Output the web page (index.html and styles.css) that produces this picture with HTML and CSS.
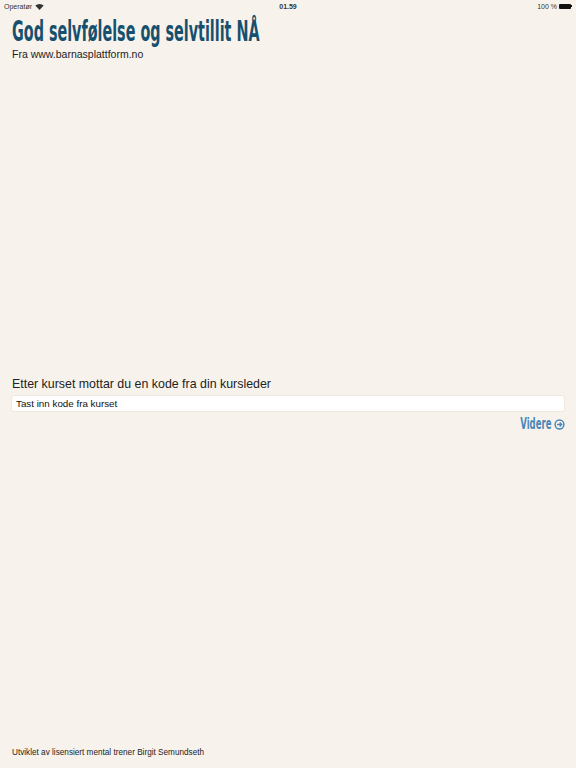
FILE: index.html
```html
<!DOCTYPE html>
<html lang="no">
<head>
<meta charset="utf-8">
<link rel="stylesheet" href="styles.css">
</head>
<body>
<div class="page">
  <div class="status">
    <div class="st-left">Operatør
      <svg class="wifi" width="9" height="7" viewBox="0 0 9 7"><path d="M4.5 7 L0.3 2.6 A6 6 0 0 1 8.7 2.6 Z" fill="#333"/></svg>
    </div>
    <div class="st-mid">01.59</div>
    <div class="st-right">100 %
      <span class="battery"><span class="bat-body"></span><span class="bat-tip"></span></span>
    </div>
  </div>
  <header class="head">
    <h1 class="title"><span class="title-text">God selvfølelse og selvtillit NÅ</span></h1>
    <p class="sub">Fra www.barnasplattform.no</p>
  </header>
  <main class="main">
    <label class="label" for="code">Etter kurset mottar du en kode fra din kursleder</label>
    <input class="input" id="code" type="text" placeholder="Tast inn kode fra kurset">
    <div class="actions">
      <a class="next" href="#"><span class="next-text">Videre</span>
        <svg width="11" height="11" viewBox="0 0 12 12"><circle cx="6" cy="6" r="4.8" fill="none" stroke="#4a87b8" stroke-width="1.6"/><path d="M3.3 6 H8.3 M6.2 3.9 L8.4 6 L6.2 8.1" fill="none" stroke="#4a87b8" stroke-width="1.5"/></svg>
      </a>
    </div>
  </main>
  <footer class="foot">Utviklet av lisensiert mental trener Birgit Semundseth</footer>
</div>
</body>
</html>
```
FILE: styles.css
```css
html, body { margin: 0; padding: 0; }
body {
  background: #f7f3ec;
  font-family: "Liberation Sans", Arial, sans-serif;
  color: #222;
}
.page {
  width: 576px;
  height: 768px;
  display: flex;
  flex-direction: column;
}
.status {
  height: 12px;
  display: flex;
  align-items: center;
  justify-content: space-between;
  padding: 0 4px;
  font-family: "Liberation Sans", sans-serif;
  font-size: 7px;
  color: #333;
  position: relative;
}
.st-left { display: flex; align-items: center; gap: 3px; }
.st-mid { position: absolute; left: 0; right: 0; text-align: center; font-weight: bold; }
.st-right { display: flex; align-items: center; gap: 2px; }
.battery { display: flex; align-items: center; }
.bat-body { width: 12px; height: 5px; background: #111; border-radius: 1px; }
.bat-tip { width: 1px; height: 2px; background: #111; }
.head { padding: 3px 12px 0; }
.title {
  margin: 0;
  font-family: "DejaVu Sans Condensed", "DejaVu Sans", sans-serif;
  font-stretch: condensed;
  font-weight: bold;
  font-size: 29px;
  line-height: 32px;
  color: #17506d;
  white-space: nowrap;
}
.title-text {
  display: inline-block;
  transform: scaleX(0.55);
  transform-origin: left center;
}
.sub {
  margin: 1px 0 0;
  font-size: 10.5px;
  color: #222;
}
.main {
  margin-top: 315px;
  padding: 0 11px 0 11px;
  display: flex;
  flex-direction: column;
}
.label {
  font-size: 12.4px;
  color: #222;
  padding-left: 1px;
  line-height: 18px;
}
.input {
  margin-top: 2px;
  height: 17px;
  box-sizing: border-box;
  border: 1px solid #eee8de;
  border-radius: 3px;
  background: #fff;
  padding: 0 4px;
  font-family: "Liberation Sans", Arial, sans-serif;
  font-size: 9.8px;
  outline: none;
}
.input::placeholder { color: #111; }
.actions { display: flex; justify-content: flex-end; margin-top: 3px; }
.next {
  display: flex;
  align-items: center;
  gap: 3px;
  text-decoration: none;
  color: #4a87b8;
  font-family: "DejaVu Sans Condensed", "DejaVu Sans", sans-serif;
  font-stretch: condensed;
  font-weight: bold;
  font-size: 15px;
  line-height: 18px;
}
.next-text {
  display: inline-block;
  transform: scaleX(0.63);
  transform-origin: right center;
  margin-left: -18px;
}
.foot {
  margin-top: auto;
  padding: 0 12px 11px;
  font-size: 8.2px;
  color: #222;
}
```
